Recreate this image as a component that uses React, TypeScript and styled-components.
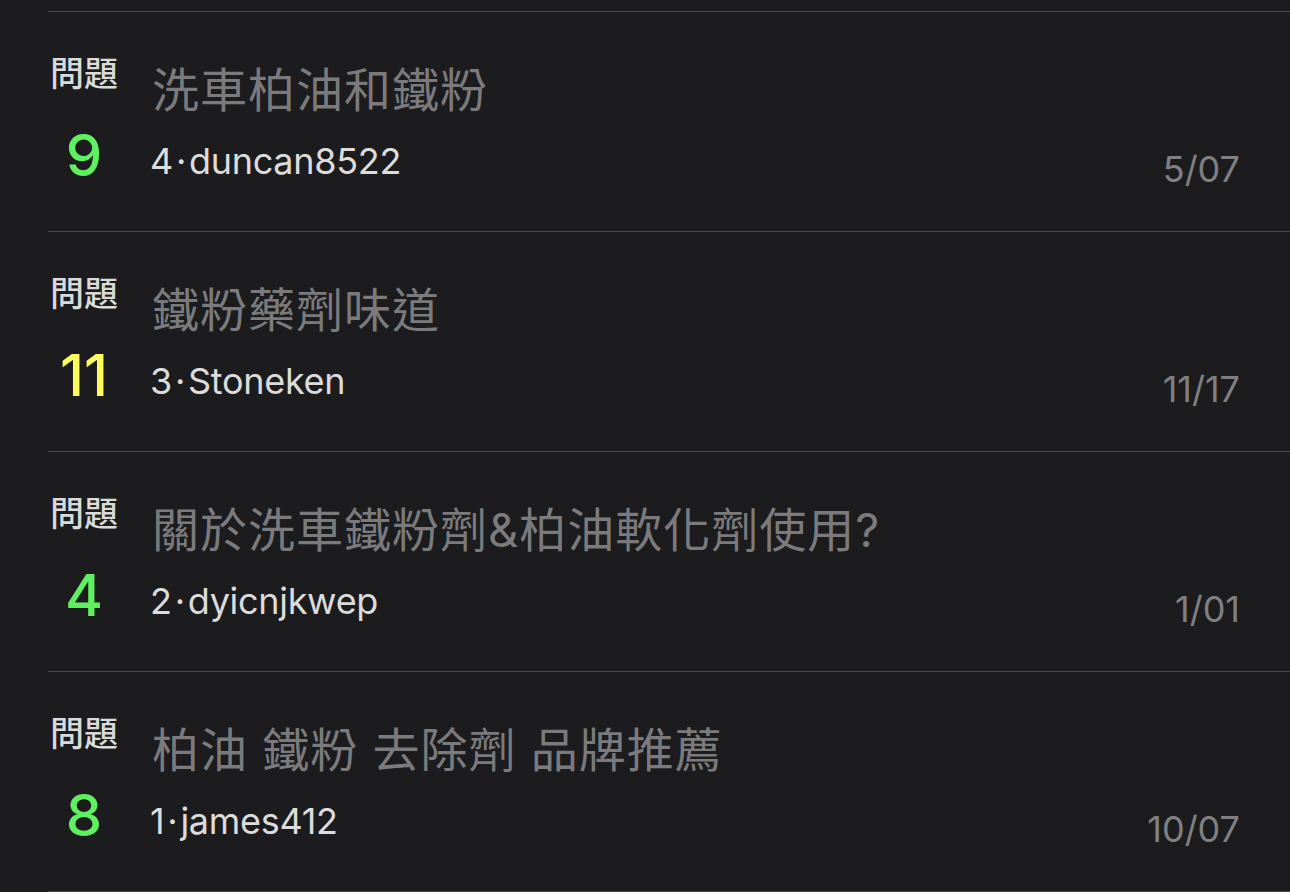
import React from 'react';
import styled, { createGlobalStyle } from 'styled-components';

const GlobalStyle = createGlobalStyle`
  html, body {
    margin: 0;
    padding: 0;
    background-color: #1c1c1e;
  }
  body {
    font-family: Inter, "Noto Sans CJK TC", "Noto Sans", sans-serif;
    -webkit-font-smoothing: antialiased;
  }
`;

const Page = styled.div`
  width: 1290px;
  height: 892px;
  overflow: hidden;
  background-color: #1c1c1e;
  padding: 11px 0 0 48px;
  box-sizing: border-box;
`;

const List = styled.ul`
  list-style: none;
  margin: 0;
  padding: 0;
  border-bottom: 1px solid #48484b;
`;

const Row = styled.li`
  display: grid;
  grid-template-columns: 72px 1fr;
  column-gap: 32px;
  height: 220px;
  box-sizing: border-box;
  border-top: 1px solid #48484b;
  padding: 42px 50px 0 0;
`;

const Votes = styled.div`
  display: flex;
  flex-direction: column;
  align-items: center;
`;

const Label = styled.span`
  font-size: 34px;
  line-height: 40px;
  font-weight: 500;
  color: #dadada;
`;

const Count = styled.span<{ $hot: boolean }>`
  margin-top: 31px;
  font-size: 58px;
  line-height: 60px;
  font-weight: 500;
  color: ${({ $hot }) => ($hot ? '#fbfb5e' : '#5ff05f')};
`;

const Body = styled.div`
  display: flex;
  flex-direction: column;
`;

const Title = styled.div`
  margin-top: 8px;
  font-size: 47px;
  line-height: 56px;
  font-weight: 400;
  letter-spacing: 1px;
  color: #7b7b7d;
  white-space: nowrap;
`;

const Meta = styled.div`
  display: flex;
  justify-content: space-between;
  align-items: flex-start;
  margin-top: 21px;
`;

const Author = styled.span`
  font-size: 36px;
  line-height: 44px;
  letter-spacing: -0.3px;
  color: #dcdcdc;
  margin-left: -2px;
`;

const Dot = styled.span`
  margin: 0 3px;
`;

const DateText = styled.span`
  padding-top: 8px;
  font-size: 36px;
  line-height: 44px;
  color: #808082;
`;

type Question = {
  count: number;
  title: string;
  answers: number;
  author: string;
  date: string;
};

const questions: Question[] = [
  { count: 9, title: '洗車柏油和鐵粉', answers: 4, author: 'duncan8522', date: '5/07' },
  { count: 11, title: '鐵粉藥劑味道', answers: 3, author: 'Stoneken', date: '11/17' },
  { count: 4, title: '關於洗車鐵粉劑&柏油軟化劑使用?', answers: 2, author: 'dyicnjkwep', date: '1/01' },
  { count: 8, title: '柏油 鐵粉 去除劑 品牌推薦', answers: 1, author: 'james412', date: '10/07' },
];

const App: React.FC = () => {
  return (
    <>
      <GlobalStyle />
      <Page>
        <List>
          {questions.map(q => (
            <Row key={q.title}>
              <Votes>
                <Label>問題</Label>
                <Count $hot={q.count > 9}>{q.count}</Count>
              </Votes>
              <Body>
                <Title>{q.title}</Title>
                <Meta>
                  <Author>
                    {q.answers}
                    <Dot>·</Dot>
                    {q.author}
                  </Author>
                  <DateText>{q.date}</DateText>
                </Meta>
              </Body>
            </Row>
          ))}
        </List>
      </Page>
    </>
  );
};

export default App;
